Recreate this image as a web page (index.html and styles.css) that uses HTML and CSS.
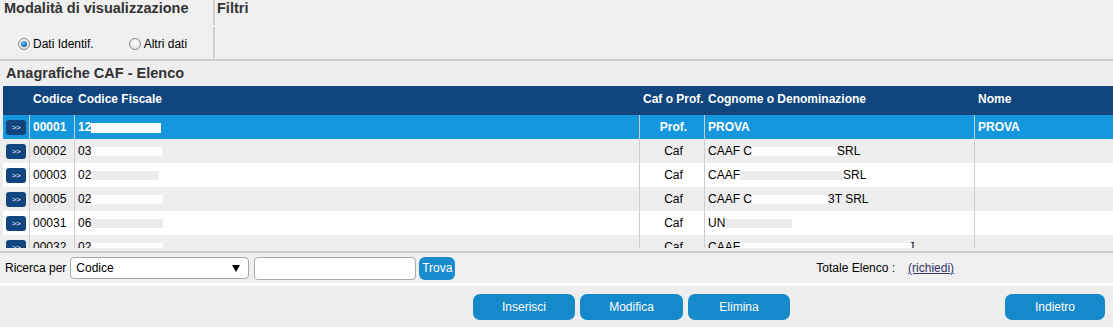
FILE: index.html
```html
<!DOCTYPE html>
<html lang="it">
<head>
<meta charset="utf-8">
<title>Anagrafiche CAF - Elenco</title>
<link rel="stylesheet" href="styles.css">
</head>
<body>
<div class="top">
  <div class="mode">
    <div class="mode-title">Modalità di visualizzazione</div>
    <div class="mode-opts">
      <label class="opt"><span class="radio checked"></span>Dati Identif.</label>
      <label class="opt opt2"><span class="radio"></span>Altri dati</label>
    </div>
  </div>
  <div class="filters">Filtri</div>
</div>

<div class="section-title">Anagrafiche CAF - Elenco</div>

<div class="grid">
  <div class="row head">
    <div class="c c1"></div>
    <div class="c c2">Codice</div>
    <div class="c c3">Codice Fiscale</div>
    <div class="c c4">Caf o Prof.</div>
    <div class="c c5">Cognome o Denominazione</div>
    <div class="c c6">Nome</div>
  </div>
  <div class="body">
    <div class="row sel">
      <div class="c c1"><span class="go">&gt;&gt;</span></div>
      <div class="c c2">00001</div>
      <div class="c c3">12<span class="mask w70 tall"></span></div>
      <div class="c c4 ctr">Prof.</div>
      <div class="c c5">PROVA</div>
      <div class="c c6">PROVA</div>
    </div>
    <div class="row alt">
      <div class="c c1"><span class="go">&gt;&gt;</span></div>
      <div class="c c2">00002</div>
      <div class="c c3">03<span class="mask w71"></span></div>
      <div class="c c4 ctr">Caf</div>
      <div class="c c5">CAAF C<span class="mask w85"></span>SRL</div>
      <div class="c c6"></div>
    </div>
    <div class="row">
      <div class="c c1"><span class="go">&gt;&gt;</span></div>
      <div class="c c2">00003</div>
      <div class="c c3">02<span class="mask w68"></span></div>
      <div class="c c4 ctr">Caf</div>
      <div class="c c5">CAAF <span class="mask w103"></span>SRL</div>
      <div class="c c6"></div>
    </div>
    <div class="row alt">
      <div class="c c1"><span class="go">&gt;&gt;</span></div>
      <div class="c c2">00005</div>
      <div class="c c3">02<span class="mask w72"></span></div>
      <div class="c c4 ctr">Caf</div>
      <div class="c c5">CAAF C<span class="mask w76"></span>3T SRL</div>
      <div class="c c6"></div>
    </div>
    <div class="row">
      <div class="c c1"><span class="go">&gt;&gt;</span></div>
      <div class="c c2">00031</div>
      <div class="c c3">06<span class="mask w72"></span></div>
      <div class="c c4 ctr">Caf</div>
      <div class="c c5">UN<span class="mask w67"></span></div>
      <div class="c c6"></div>
    </div>
    <div class="row alt">
      <div class="c c1"><span class="go">&gt;&gt;</span></div>
      <div class="c c2">00032</div>
      <div class="c c3">02<span class="mask w72"></span></div>
      <div class="c c4 ctr">Caf</div>
      <div class="c c5">CAAF <span class="mask w171"></span>]</div>
      <div class="c c6"></div>
    </div>
  </div>
</div>

<div class="search">
  <span class="lbl">Ricerca per</span>
  <div class="select"><span>Codice</span><span class="arrow"></span></div>
  <div class="input"></div>
  <button class="trova">Trova</button>
  <span class="total">Totale Elenco :</span>
  <a class="link" href="#">(richiedi)</a>
</div>

<div class="actions">
  <button class="btn">Inserisci</button>
  <button class="btn">Modifica</button>
  <button class="btn">Elimina</button>
  <button class="btn back">Indietro</button>
</div>
</body>
</html>
```

FILE: styles.css
```css
* { box-sizing: border-box; }
html, body { margin: 0; padding: 0; }
body {
  background: #eeeeee;
  font-family: "Liberation Sans", Arial, sans-serif;
  font-size: 12px;
  color: #000;
  width: 1113px;
  height: 327px;
  overflow: hidden;
}

/* top panel */
.top {
  display: flex;
  height: 61px;
  border-bottom: 2px solid #cccccc;
  background: #f0f0f0;
}
.mode {
  width: 215px;
  display: flex;
  flex-direction: column;
}
.mode-title {
  height: 25px;
  padding-left: 4px;
  border-right: 2px solid #d0d0d0;
  font-size: 14.5px;
  font-weight: bold;
  line-height: 17px;
  color: #333;
  white-space: nowrap;
}
.mode-opts {
  margin-top: 2px;
  height: 31px;
  border-right: 2px solid #d0d0d0;
  display: flex;
  align-items: center;
  padding-left: 18px;
  padding-top: 2px;
}
.opt {
  display: flex;
  align-items: center;
  gap: 3px;
  color: #000;
  font-size: 12px;
}
.opt2 { margin-left: 35px; }
.radio {
  width: 12px;
  height: 12px;
  border-radius: 50%;
  border: 1px solid #8a8a8a;
  background: radial-gradient(circle at 50% 35%, #ffffff 0%, #e6e6e6 70%, #d0d0d0 100%);
  position: relative;
  display: inline-block;
}
.radio.checked::after {
  content: "";
  position: absolute;
  left: 2px;
  top: 2px;
  width: 6px;
  height: 6px;
  border-radius: 50%;
  background: radial-gradient(circle at 40% 35%, #7fc4f5 0%, #1f6fb8 55%, #0d3f78 100%);
}
.filters {
  padding-left: 2px;
  font-size: 14.5px;
  font-weight: bold;
  line-height: 17px;
  color: #333;
}

.section-title {
  padding: 4px 6px 4px;
  font-size: 14.5px;
  font-weight: bold;
  line-height: 17px;
  color: #333;
}

/* grid table */
.grid {
  margin-left: 3px;
}
.row {
  display: grid;
  grid-template-columns: 26px 45px 565px 65px 270px 1fr;
  height: 24px;
  background: #ffffff;
}
.row.alt { background: #eeeeee; }
.row.head {
  height: 29px;
  background: #10457e;
  color: #fff;
  font-weight: bold;
}
.row.head .c { padding-bottom: 3px; }
.row.sel {
  background: #1597de;
  color: #fff;
  font-weight: bold;
}
.c {
  display: flex;
  align-items: center;
  padding-left: 3px;
  white-space: nowrap;
  overflow: hidden;
}
.body .c + .c { border-left: 1px solid #cccccc; }
.row.head .c + .c { padding-left: 4px; }
.body .c + .c { padding-left: 3px; }
.c.ctr { justify-content: center; padding-left: 0; }
.c1 { padding-left: 3px; }
.body {
  height: 133px;
  overflow: hidden;
}
.go {
  display: inline-block;
  width: 20px;
  height: 15px;
  background: #10457e;
  color: #fff;
  border-radius: 3px;
  font-size: 8px;
  font-weight: normal;
  line-height: 15px;
  text-align: center;
  letter-spacing: -0.5px;
}
.mask {
  display: inline-block;
  height: 9px;
  background: #ffffff;
  margin-top: 1px;
}
.mask.tall { height: 10px; }
.row:not(.alt):not(.sel) .mask { background: #ececec; }
.w67 { width: 67px; }
.w68 { width: 68px; }
.w70 { width: 70px; }
.w71 { width: 71px; }
.w72 { width: 72px; }
.w76 { width: 76px; }
.w85 { width: 85px; }
.w103 { width: 103px; }
.w171 { width: 171px; }

/* search bar */
.search {
  margin-top: 3px;
  border-top: 2px solid #cccccc;
  border-bottom: 3px solid #ffffff;
  height: 35px;
  display: flex;
  align-items: center;
  padding-left: 5px;
  background: #f0f0f0;
}
.lbl { color: #000; }
.select {
  margin-left: 4px;
  width: 179px;
  height: 22px;
  border: 1px solid #a9a9a9;
  border-radius: 4px;
  background: #fff;
  display: flex;
  align-items: center;
  justify-content: space-between;
  padding: 0 8px 0 5px;
  font-size: 12px;
}
.arrow {
  width: 0;
  height: 0;
  border-left: 4px solid transparent;
  border-right: 4px solid transparent;
  border-top: 7px solid #000;
}
.input {
  margin-left: 5px;
  width: 162px;
  height: 23px;
  border: 1px solid #a9a9a9;
  border-radius: 4px;
  background: #fff;
}
.trova {
  margin-left: 3px;
  width: 36px;
  height: 23px;
  border: 0;
  border-radius: 6px;
  background: #1a8bcc;
  color: #fff;
  font-family: "Liberation Sans", Arial, sans-serif;
  font-size: 12px;
  padding: 0;
}
.total {
  margin-left: 361px;
  color: #000;
}
.link {
  margin-left: 13px;
  color: #33336b;
  text-decoration: underline;
}

/* actions */
.actions {
  display: flex;
  padding: 8px 8px 0 473px;
  gap: 5px;
}
.btn {
  width: 102px;
  height: 26px;
  border: 0;
  border-radius: 7px;
  background: #1589c9;
  color: #fff;
  font-family: "Liberation Sans", Arial, sans-serif;
  font-size: 12px;
  padding: 0;
}
.btn:nth-child(2) { width: 103px; }
.btn.back { margin-left: auto; width: 100px; }
```
